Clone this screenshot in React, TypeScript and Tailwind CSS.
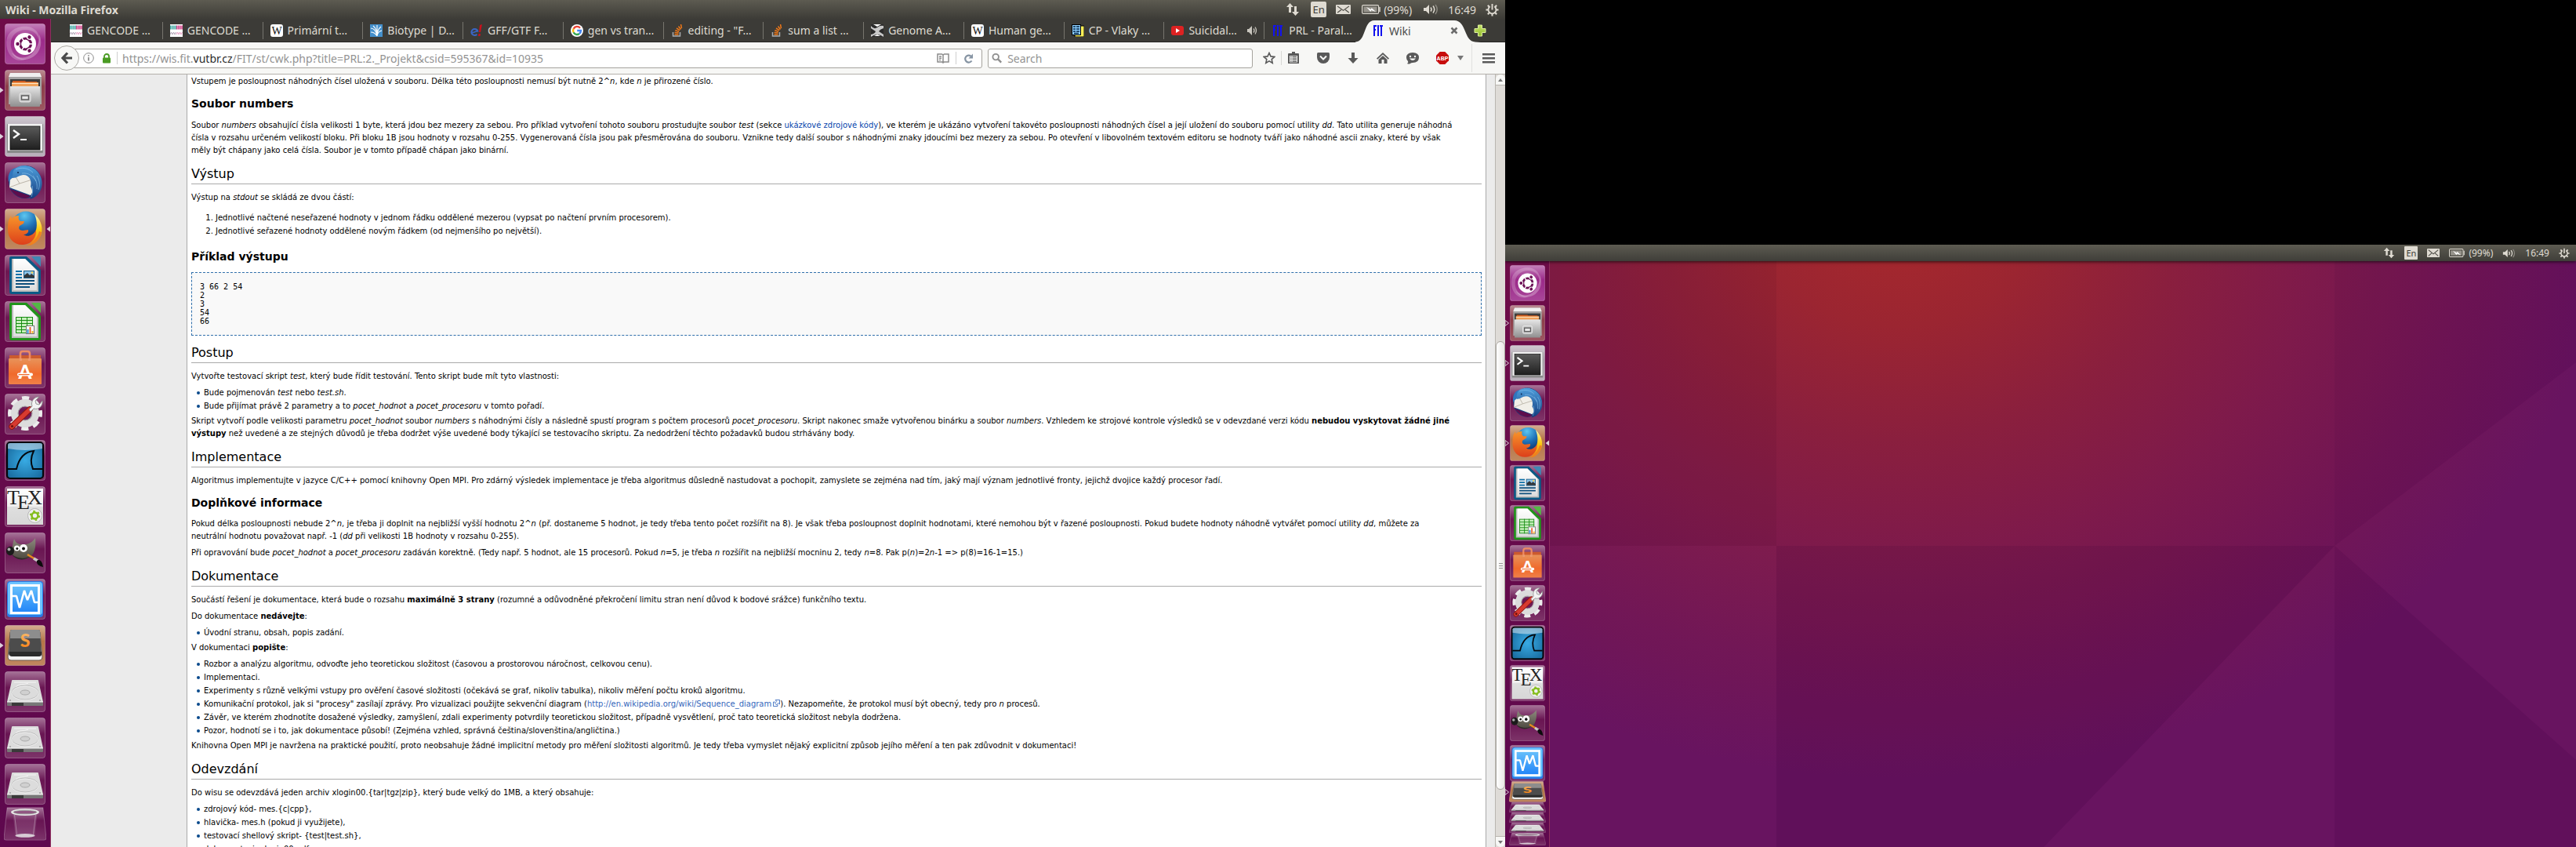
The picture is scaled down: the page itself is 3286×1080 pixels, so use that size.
import React from "react";

type IconName =
  | "ubuntu" | "files" | "terminal" | "thunderbird" | "firefox" | "writer" | "calc" | "software"
  | "settings" | "wireshark" | "tex" | "gimp" | "monitor" | "sublime" | "drive" | "trash";

const tileTone: Partial<Record<IconName, string>> = {
  ubuntu: "#992487",
  files: "#8a3844",
  terminal: "#aea3b0",
  firefox: "#b47242",
  sublime: "#b47242",
};

function Defs() {
  return (
    <svg className="absolute h-0 w-0" aria-hidden="true">
      <defs>
        <linearGradient id="gloss" x1="0" y1="0" x2="0" y2="1">
          <stop offset="0" stopColor="#fff" stopOpacity=".42" />
          <stop offset=".4" stopColor="#fff" stopOpacity=".03" />
          <stop offset=".6" stopColor="#fff" stopOpacity=".06" />
          <stop offset="1" stopColor="#fff" stopOpacity=".16" />
        </linearGradient>
        <linearGradient id="steel" x1="0" y1="0" x2="0" y2="1">
          <stop offset="0" stopColor="#e6e6e6" />
          <stop offset="1" stopColor="#8f8f8f" />
        </linearGradient>
        <linearGradient id="screen" x1="0" y1="0" x2="0" y2="1">
          <stop offset="0" stopColor="#5a5a5a" />
          <stop offset="1" stopColor="#1f1f1f" />
        </linearGradient>
        <linearGradient id="bird" x1="0" y1="0" x2="0" y2="1">
          <stop offset="0" stopColor="#4f9fdc" />
          <stop offset="1" stopColor="#123a7c" />
        </linearGradient>
        <radialGradient id="globe" cx=".45" cy=".15" r=".8">
          <stop offset="0" stopColor="#5cc6f0" />
          <stop offset=".5" stopColor="#1f72b8" />
          <stop offset="1" stopColor="#0b2d66" />
        </radialGradient>
        <linearGradient id="fox" x1="0" y1="0" x2="0" y2="1">
          <stop offset="0" stopColor="#f7942a" />
          <stop offset="1" stopColor="#dd3f1a" />
        </linearGradient>
        <linearGradient id="flame" x1="0" y1="0" x2="0" y2="1">
          <stop offset="0" stopColor="#fff6b0" />
          <stop offset=".5" stopColor="#fbc910" />
          <stop offset="1" stopColor="#ee7a18" />
        </linearGradient>
        <linearGradient id="paper" x1="0" y1="0" x2="0" y2="1">
          <stop offset="0" stopColor="#ffffff" />
          <stop offset="1" stopColor="#dedede" />
        </linearGradient>
        <linearGradient id="bag" x1="0" y1="0" x2="0" y2="1">
          <stop offset="0" stopColor="#e8935a" />
          <stop offset=".6" stopColor="#f06a2c" />
          <stop offset="1" stopColor="#f08048" />
        </linearGradient>
        <radialGradient id="sea" cx=".5" cy=".5" r=".6">
          <stop offset="0" stopColor="#38abe4" />
          <stop offset="1" stopColor="#1b6fa3" />
        </radialGradient>
        <linearGradient id="azure" x1="0" y1="0" x2="0" y2="1">
          <stop offset="0" stopColor="#69c1fb" />
          <stop offset="1" stopColor="#2084f8" />
        </linearGradient>
        <linearGradient id="fur" x1="0" y1="0" x2="0" y2="1">
          <stop offset="0" stopColor="#8e8a7e" />
          <stop offset="1" stopColor="#4c483f" />
        </linearGradient>
        <linearGradient id="amber" x1="0" y1="0" x2="0" y2="1">
          <stop offset="0" stopColor="#fbc67c" />
          <stop offset="1" stopColor="#f77a08" />
        </linearGradient>
        <linearGradient id="lime" x1="0" y1="0" x2="0" y2="1">
          <stop offset="0" stopColor="#c4e26a" />
          <stop offset="1" stopColor="#94bd2e" />
        </linearGradient>
      </defs>
    </svg>
  );
}

function OfficePage({ frame, corner, children }: { frame: string; corner: string; children: React.ReactNode }) {
  return (
    <g>
      <path d="M6 4q0-2 2-2h20l18 17v28q0 3-3 3H9q-3 0-3-3z" fill={frame} />
      <path d="M9 5h17l17 16v26H9z" fill="#bcbcbc" />
      <path d="M11 5h15l15 15v25H11z" fill="url(#paper)" />
      <path d="M34 2h10q2 0 2 2v11z" fill={corner} />
      {children}
    </g>
  );
}

function Drawing({ name }: { name: IconName }) {
  switch (name) {
    case "ubuntu":
      return (
        <g>
          <path d="M3 32C-2 12 14 2 30 4c12 2 18 14 13 25C46 14 36 8 27 8 14 8 6 18 8 30c2 10 10 16 20 15-12 6-22-2-25-13z" fill="#fff" opacity=".22" />
          <path d="M44 14c6 12 0 30-18 32-8 1-15-4-17-9 8 9 20 8 27 0 6-7 9-15 8-23z" fill="#fff" opacity=".28" />
          <circle cx="26" cy="26" r="14" fill="#fff" />
          <circle cx="26.500" cy="26" r="7" fill="none" stroke="#6b0f54" strokeWidth="3.200" />
          {[0, 120, 240].map((a) => (
            <g key={a} transform={`rotate(${a} 26.5 26)`}>
              <circle cx="16.500" cy="26" r="3.400" fill="#fff" />
              <circle cx="16.500" cy="26" r="2.200" fill="#6b0f54" />
              <path d="M31 26h6" stroke="#fff" strokeWidth="1.500" />
            </g>
          ))}
        </g>
      );
    case "files":
      return (
        <g>
          <path d="M7 4h38l2 6v34H5V10z" fill="#a5a5a5" />
          <path d="M7 4h38l2 5H5z" fill="#f0f0f0" />
          <rect x="7" y="12" width="38" height="10" fill="#3c3c3c" />
          <path d="M10 14h16l1 1h14v7H10z" fill="#cf5a1e" />
          <rect x="9" y="16" width="34" height="5" fill="#f0a25a" />
          <rect x="9" y="17" width="34" height="1" fill="#fde3c4" />
          <rect x="7" y="21" width="38" height="26" rx="1" fill="url(#steel)" />
          <path d="M7 21.500h38" stroke="#e4e4e4" />
          <rect x="19" y="30" width="14" height="11" rx="2" fill="#c9c9c9" stroke="#f2f2f2" strokeWidth=".8" />
          <rect x="21.500" y="33" width="9" height="5" fill="#e8e8e8" stroke="#5c5c5c" strokeWidth="1.500" />
        </g>
      );
    case "terminal":
      return (
        <g>
          <rect x="3" y="10" width="46" height="37" rx="1" fill="#8a8a8a" />
          <rect x="4" y="10" width="44" height="34" fill="#f1f1f1" />
          <rect x="7" y="13" width="38" height="30" fill="url(#screen)" stroke="#000" strokeWidth=".7" />
          <path d="M11 18l7 5-7 5" fill="none" stroke="#fff" strokeWidth="2.300" />
          <path d="M20 30h8" stroke="#fff" strokeWidth="2" />
        </g>
      );
    case "thunderbird":
      return (
        <g>
          <circle cx="26" cy="25" r="21" fill="#15407f" />
          <path d="M7 34l26 9q-3 3-7 3-12-1-19-12z" fill="#5e0d4c" />
          <path d="M7 18l24-7 9 20-7 11L6 32z" fill="#f1efe8" />
          <path d="M12 15l7 12 16-5M19 27L6 32" fill="none" stroke="#b3ada0" strokeWidth=".9" />
          <path d="M5 25C3 15 8 8 14 7c-3 5-4 9-3 12-3 2-5 4-6 6z" fill="#2f76bd" />
          <path d="M12 9c6-6 20-7 29 2 9 9 9 24-1 32-2 2-5 3-8 4 4-6 4-12 1-16 2-8-2-15-9-15-5 0-8 4-14 4 0-4 0-8 2-11z" fill="url(#bird)" />
          <path d="M14 9c8-3 16-2 22 4M22 14c8-1 14 3 18 10M36 17c4 5 6 10 5 17M41 17c4 6 4 12 2 18M35 30c1 5 1 9-1 14" fill="none" stroke="#8ec7ee" strokeWidth=".9" opacity=".7" />
          <circle cx="17" cy="13" r="1" fill="#0b2450" />
        </g>
      );
    case "firefox":
      return (
        <g>
          <circle cx="27" cy="22" r="18.500" fill="url(#globe)" />
          <path d="M38 7c7 6 11 15 9 24-2 8-8 14-15 16l5-13c5-7 5-18 1-27z" fill="url(#flame)" />
          <path d="M5 15l3-6 1 4c3-4 7-4 9-4-1 3 0 6 2 7h5l-1 3-5 3c-2 3 0 6 4 6l7-1c1 4-3 6-6 6 5 4 13 1 16-6 1 9-5 18-16 19C12 47 4 38 4 27c0-5 0-8 1-12z" fill="url(#fox)" />
          <path d="M44 29c-2 8-8 15-17 18 9 0 18-6 20-17z" fill="#ef8120" />
        </g>
      );
    case "writer":
      return (
        <OfficePage frame="#0b5a86" corner="#3f88b4">
          <path d="M14 21h8M14 25h8M14 29h8" stroke="#0f70a8" strokeWidth="2" />
          <path d="M14 33h24M14 37h24M14 41h18" stroke="#0d4f7c" strokeWidth="2" />
          <rect x="24.500" y="20.500" width="13" height="9" fill="#8cc4ea" stroke="#175c88" />
          <path d="M25 29v-3l4-3 3 3 2-2 4 3v2z" fill="#33373a" />
          <circle cx="35" cy="22.500" r="1.300" fill="#fbd34d" />
        </OfficePage>
      );
    case "calc":
      return (
        <OfficePage frame="#20941a" corner="#53b844">
          <rect x="14.500" y="20.500" width="21" height="20" fill="#c7f0bd" stroke="#168c10" />
          <path d="M14 24.500h22M14 28.500h22M14 32.500h22M14 36.500h22M21.500 20v21M28.500 20v21" stroke="#168c10" />
          <rect x="27.500" y="31.500" width="10" height="10" fill="#fff" stroke="#777" />
          <path d="M29.500 36v5" strokeWidth="2" stroke="#2a8fd8" />
          <path d="M32.500 33v8" strokeWidth="2" stroke="#e8662a" />
          <path d="M35.500 38v3" strokeWidth="2" stroke="#f3b824" />
        </OfficePage>
      );
    case "software":
      return (
        <g>
          <path d="M6 10h40v5H6z" fill="#cc5a2e" />
          <path d="M20 17v-9q0-3 3-3h6q3 0 3 3v9" fill="none" stroke="#ee8a62" strokeWidth="2.600" />
          <rect x="5" y="14" width="42" height="33" rx="1" fill="url(#bag)" />
          <path d="M20.500 14v3M31.500 14v3" stroke="#ee9a72" strokeWidth="3" />
          <text x="26" y="40" textAnchor="middle" fontFamily="Lato" fontWeight="900" fontSize="24" fill="#fff">A</text>
          <rect x="16" y="32.500" width="20" height="4" rx="2" fill="#fff" />
          <rect x="17.500" y="34" width="14" height="1.200" fill="#f06a2c" />
        </g>
      );
    case "settings":
      return (
        <g>
          <circle cx="26" cy="25" r="19" fill="none" stroke="#ececec" strokeWidth="6" strokeDasharray="8.900 6.020" strokeDashoffset="4.450" />
          <circle cx="26" cy="25" r="13.500" fill="none" stroke="#dcdcdc" strokeWidth="9" />
          <circle cx="26" cy="25" r="9" fill="none" stroke="#a9a9a9" strokeWidth="1.200" />
          <path d="M9 42l23-22" stroke="#8e1510" strokeWidth="7.500" strokeLinecap="round" />
          <path d="M9 42l23-22" stroke="#d73a30" strokeWidth="5.500" strokeLinecap="round" />
          <circle cx="9.500" cy="41.500" r="1.600" fill="#6d100c" />
          <path d="M31 20l4-4c-2-6 2-12 9-12l-5 5 1 4 4 1 4-5c1 7-5 12-11 10l-4 4z" fill="#f4f4f4" stroke="#8c8c8c" strokeWidth=".9" />
        </g>
      );
    case "wireshark":
      return (
        <g>
          <rect x="3" y="3" width="46" height="46" rx="4" fill="url(#sea)" stroke="#04080c" strokeWidth="2.200" />
          <path d="M4 6q0-2 3-2h38q3 0 3 2v5q-22 4-44 0z" fill="#fff" opacity=".45" />
          <path d="M4 37h11c3-13 9-22 22-23-4 8-4 16-1 23h12" fill="none" stroke="#04080c" strokeWidth="2" />
        </g>
      );
    case "tex":
      return (
        <g>
          <rect x="3" y="3" width="46" height="46" fill="url(#paper)" />
          <path d="M3 26h46v23H3z" fill="#cfcfcf" opacity=".5" />
          <g fontFamily="Liberation Serif" fontSize="26" fill="#222">
            <text x="3" y="23">T</text>
            <text x="16" y="29">E</text>
            <text x="29" y="23">X</text>
          </g>
          <circle cx="38.500" cy="37.500" r="9" fill="#efefef" stroke="#aaa" strokeWidth=".8" />
          <circle cx="38.500" cy="37.500" r="4" fill="none" stroke="#84bd1c" strokeWidth="2.600" />
          <circle cx="38.500" cy="37.500" r="5.700" fill="none" stroke="#84bd1c" strokeWidth="2" strokeDasharray="2.500 3.470" />
        </g>
      );
    case "gimp":
      return (
        <g>
          <path d="M12 8c2 5 5 7 9 7 8 1 14-2 18-8 1 10 0 18-6 24-8 5-18 4-23-3-1-7 0-14 2-20z" fill="url(#fur)" />
          <path d="M9 28c6 8 18 9 26 0-6 6-16 7-26 0z" fill="#2c2a26" />
          <circle cx="15.500" cy="20" r="3.600" fill="#fff" />
          <circle cx="24" cy="20" r="5" fill="#fff" />
          <circle cx="15.800" cy="20.500" r="1.500" fill="#111" />
          <circle cx="24" cy="20.500" r="2" fill="#111" />
          <ellipse cx="7" cy="23.500" rx="5" ry="5.700" fill="#1b1b1b" />
          <ellipse cx="5.500" cy="21.500" rx="2" ry="2" fill="#a8a8a8" />
          <path d="M29 28l10 6" stroke="#e58a1f" strokeWidth="2.600" />
          <path d="M37 33l5 3" stroke="#c9c9c9" strokeWidth="3.600" />
          <path d="M41 36c4-3 7 1 8 8-5-1-9-4-8-8z" fill="#0c0c0c" />
        </g>
      );
    case "monitor":
      return (
        <g>
          <rect x="3" y="3" width="46" height="46" rx="4" fill="#2a7ae6" />
          <rect x="4" y="4" width="44" height="42" rx="4" fill="#6cc3ff" />
          <rect x="8.500" y="8.500" width="35" height="35" fill="url(#azure)" stroke="#fff" strokeWidth="3" />
          <path d="M9 22h6l4 15 6-22 4 12 5-12 4 15h6" fill="none" stroke="#fff" strokeWidth="2.600" strokeLinejoin="bevel" />
        </g>
      );
    case "sublime":
      return (
        <g>
          <path d="M7 9h38l3 32q0 4-4 4H8q-4 0-4-4z" fill="#f2f2f2" stroke="#6d5a4c" strokeWidth="1" />
          <path d="M9 6h34q2 0 2 2l2 28q0 3-3 3H8q-3 0-3-3L7 8q0-2 2-2z" fill="#4c4c4c" />
          <path d="M9 6h34q2 0 2 2l1 9H7V8q0-2 2-2z" fill="#8d8d8d" />
          <path d="M6 34h41v3q0 3-3 3H9q-3 0-3-3z" fill="#2b2b2b" />
          <text x="26" y="28" textAnchor="middle" fontFamily="Lato" fontWeight="900" fontSize="23" fill="url(#amber)">S</text>
        </g>
      );
    case "drive":
      return (
        <g>
          <path d="M10 11h32q1 0 1 1l6 27H3l6-27q0-1 1-1z" fill="#dcdcdc" />
          <rect x="3" y="39" width="46" height="5" rx="1" fill="#777" />
          <rect x="9" y="40" width="15" height="4" fill="#3a3a3a" />
          <path d="M3 39h46" stroke="#f8f8f8" />
          <path d="M12 14h28M14 20c5-5 10-2 16-5" stroke="#f6f6f6" fill="none" />
          <ellipse cx="26" cy="27" rx="17" ry="9" fill="none" stroke="#b9b9b9" strokeWidth=".9" />
          <ellipse cx="26" cy="28" rx="17" ry="9" fill="none" stroke="#f4f4f4" strokeWidth=".7" />
          <ellipse cx="26" cy="27" rx="6" ry="3" fill="#d0d0d0" stroke="#a5a5a5" strokeWidth=".9" />
          <circle cx="7" cy="37" r=".8" fill="#777" />
          <circle cx="45" cy="37" r=".8" fill="#777" />
        </g>
      );
    case "trash":
      return (
        <g>
          <path d="M11 9h30l-3 35q-12 5-24 0z" fill="#fff" opacity=".12" />
          <path d="M13 12l3 31M39 12l-3 31" stroke="#cbb4c6" opacity=".5" />
          <ellipse cx="26" cy="8" rx="16" ry="4" fill="none" stroke="#e6e6e6" strokeWidth="2.600" />
          <ellipse cx="26" cy="8" rx="14" ry="2.800" fill="none" stroke="#8b8b8b" strokeWidth=".8" />
          <ellipse cx="26" cy="44" rx="12" ry="3" fill="#d7ccd4" />
        </g>
      );
  }
}

function Tile({ name, folded, className }: { name: IconName; folded?: boolean; className: string }) {
  const shape = folded ? "M4 1h44l4 47q0 3-3 3H3q-3 0-3-3z" : "M3.500.5h45q3 0 3 3v45q0 3-3 3h-45q-3 0-3-3v-45q0-3 3-3z";
  return (
    <svg viewBox="0 0 52 52" preserveAspectRatio="none" className={className} aria-hidden="true">
      <path d={shape} fill={tileTone[name] ?? "#67124f"} fillOpacity={tileTone[name] ? 1 : 0.6} />
      <path d={shape} fill="url(#gloss)" stroke="#fff" strokeOpacity=".25" />
      <Drawing name={name} />
    </svg>
  );
}

const apps: { name: IconName; label: string; running?: boolean; active?: boolean }[] = [
  { name: "ubuntu", label: "Search your computer" },
  { name: "files", label: "Files", running: true },
  { name: "terminal", label: "Terminal", running: true },
  { name: "thunderbird", label: "Thunderbird Mail" },
  { name: "firefox", label: "Firefox Web Browser", running: true, active: true },
  { name: "writer", label: "LibreOffice Writer" },
  { name: "calc", label: "LibreOffice Calc" },
  { name: "software", label: "Ubuntu Software" },
  { name: "settings", label: "System Settings" },
  { name: "wireshark", label: "Wireshark" },
  { name: "tex", label: "Texmaker" },
  { name: "gimp", label: "GIMP" },
  { name: "monitor", label: "System Monitor" },
];

const tail: { name: IconName; label: string; running?: boolean }[] = [
  { name: "sublime", label: "Sublime Text", running: true },
  { name: "drive", label: "Volume 1" },
  { name: "drive", label: "Volume 2" },
  { name: "drive", label: "Volume 3" },
];

function Pip({ side, hollow }: { side: "left" | "right"; hollow?: boolean }) {
  return (
    <svg
      viewBox="0 0 5 8"
      className={side === "left" ? "absolute top-1/2 left-0 h-2 w-[5px] -translate-y-1/2" : "absolute top-1/2 right-0 h-2 w-[5px] -translate-y-1/2"}
      aria-hidden="true"
    >
      <path d={side === "left" ? "M0 0.500L4.500 4L0 7.500z" : "M5 0.500L0.500 4L5 7.500z"} fill={hollow ? "none" : "#dcd0da"} stroke="#dcd0da" strokeWidth={hollow ? 1 : 0} />
    </svg>
  );
}

function Launcher() {
  return (
    <nav aria-label="Launcher" className="flex w-[65px] shrink-0 flex-col gap-[7px] border-r border-[#8e2f5e] bg-gradient-to-b from-[#6e0c48] to-[#5e084e] pt-[6px]">
      {[...apps, ...tail].map((a) => (
        <button key={a.label} aria-label={a.label} className="relative flex w-full shrink-0 justify-center">
          <Tile name={a.name} className="h-[52px] w-[52px]" />
          {a.running && <Pip side="left" />}
          {a.name === "firefox" && <Pip side="right" />}
        </button>
      ))}
      <button aria-label="Trash" className="-mt-1 flex w-full shrink-0 justify-center">
        <Tile name="trash" folded className="h-[43px] w-[54px]" />
      </button>
    </nav>
  );
}

function SmallLauncher() {
  return (
    <nav aria-label="Launcher" className="flex w-[57px] shrink-0 flex-col border-r border-[#8e2f5e] bg-gradient-to-b from-[#6e0c48] to-[#5e084e] pt-[5px]">
      <div className="flex flex-col gap-[5px]">
        {apps.map((a) => (
          <button key={a.label} aria-label={a.label} className="relative flex w-full shrink-0 justify-center">
            <Tile name={a.name} className="h-[46px] w-[45px]" />
            {a.running && <Pip side="left" hollow />}
            {a.active && <Pip side="right" />}
          </button>
        ))}
      </div>
      {tail.map((a) => (
        <button key={a.label} aria-label={a.label} className="relative flex w-full shrink-0 justify-center">
          <Tile name={a.name} folded className={a.name === "sublime" ? "h-[27px] w-[47px]" : "h-[13px] w-[47px]"} />
          {a.running && <Pip side="left" hollow />}
        </button>
      ))}
      <button aria-label="Trash" className="flex w-full shrink-0 justify-center">
        <Tile name="trash" folded className="h-4 w-[47px]" />
      </button>
    </nav>
  );
}

function ArrowsIcon({ className }: { className: string }) {
  return (
    <svg viewBox="0 0 18 18" className={className} fill="#dfdbd2" aria-hidden="true">
      <path d="M5.500 1L10 6H7v7H4V6H1zM12.500 17L8 12h3V5h3v7h3z" />
    </svg>
  );
}
function MailIcon({ className }: { className: string }) {
  return (
    <svg viewBox="0 0 18 13" preserveAspectRatio="none" className={className} aria-hidden="true">
      <rect width="18" height="13" rx="1" fill="#dfdbd2" />
      <path d="M2 2l7 6 7-6M2 11l4.500-4M16 11l-4.500-4" fill="none" stroke="#4a4842" strokeWidth="1.200" />
    </svg>
  );
}
function BatteryIcon({ className }: { className: string }) {
  return (
    <svg viewBox="0 0 24 12" preserveAspectRatio="none" className={className} aria-hidden="true">
      <rect x=".6" y=".6" width="21" height="10.800" rx="1.500" fill="none" stroke="#dfdbd2" strokeWidth="1.200" />
      <rect x="2.500" y="2.500" width="17" height="7" fill="#96938b" />
      <path d="M23 3v6" stroke="#dfdbd2" strokeWidth="1.500" />
      <path d="M6 3l6 3 .5-2L18 9l-6-2-.5 2z" fill="#fff" />
    </svg>
  );
}
function VolumeIcon({ className }: { className: string }) {
  return (
    <svg viewBox="0 0 20 14" className={className} fill="none" aria-hidden="true">
      <path d="M1 5h3l4-4v12L4 9H1z" fill="#dfdbd2" />
      <path d="M10 4.500q2 2.500 0 5M13 2.500q3.500 4.500 0 9" stroke="#dfdbd2" strokeWidth="1.500" />
      <path d="M16 1q4.500 6 0 12" stroke="#8a877f" strokeWidth="1.500" />
    </svg>
  );
}
function PowerIcon({ className }: { className: string }) {
  return (
    <svg viewBox="0 0 18 18" className={className} fill="none" stroke="#dfdbd2" aria-hidden="true">
      <path d="M6 4.500a5.300 5.300 0 1 0 6 0" strokeWidth="2" />
      <path d="M9 1v8" strokeWidth="2" />
      <path d="M3 3l2 2M15 3l-2 2M.5 9h3M14.500 9h3M3 15l2-2M15 15l-2-2M9 14.500v3" strokeWidth="2.200" />
    </svg>
  );
}

function BigPanel() {
  return (
    <header className="flex h-6 shrink-0 items-center bg-gradient-to-b from-[#5d5b51] to-[#3d3c37] pr-2 pl-[7px] font-['Noto_Sans'] text-[14px] text-[#dfdbd2]">
      <h1 className="flex-1 text-[14px] font-bold">Wiki - Mozilla Firefox</h1>
      <button aria-label="Network" className="mr-[14px]"><ArrowsIcon className="h-[18px] w-[18px]" /></button>
      <button className="mr-3 h-5 w-5 rounded-[2px] bg-[#dfdbd2] text-center text-[13px] leading-5 text-[#3d3c37]">En</button>
      <button aria-label="Messages" className="mr-[14px]"><MailIcon className="h-3 w-[19px]" /></button>
      <button className="mr-[14px] flex items-center gap-1"><BatteryIcon className="h-3 w-6" />(99%)</button>
      <button aria-label="Sound" className="mr-3"><VolumeIcon className="h-[14px] w-5" /></button>
      <button className="mr-3">16:49</button>
      <button aria-label="Session"><PowerIcon className="h-[17px] w-[17px]" /></button>
    </header>
  );
}

function SmallPanel() {
  return (
    <header className="relative z-10 flex h-[21px] shrink-0 items-center justify-end bg-gradient-to-b from-[#5d5b51] to-[#3f3e39] pr-2 font-['Noto_Sans'] text-[12px] text-[#dfdbd2] shadow-[0_1px_4px_rgba(0,0,0,0.7)]">
      <button aria-label="Network" className="mr-3"><ArrowsIcon className="h-[15px] w-[15px]" /></button>
      <button className="mr-3 h-[17px] w-[17px] rounded-[1px] bg-[#dfdbd2] text-center text-[11px] leading-[17px] text-[#3d3c37]">En</button>
      <button aria-label="Messages" className="mr-3"><MailIcon className="h-[11px] w-4" /></button>
      <button className="mr-3 flex items-center gap-[5px]"><BatteryIcon className="h-[11px] w-5" />(99%)</button>
      <button aria-label="Sound" className="mr-3"><VolumeIcon className="h-3 w-[17px]" /></button>
      <button className="mr-3">16:49</button>
      <button aria-label="Session"><PowerIcon className="h-[14px] w-[14px]" /></button>
    </header>
  );
}

type Fav = "gencode" | "wikipedia" | "biotype" | "ensembl" | "google" | "stack" | "ucsc" | "idos" | "youtube" | "fit";

function Favicon({ kind }: { kind: Fav }) {
  const body: Record<Fav, React.ReactNode> = {
    gencode: (
      <g>
        <rect width="16" height="16" fill="#fff" />
        <path d="M0 4h8" stroke="#46a9a4" strokeWidth="5" strokeDasharray="1.500 .6" />
        <path d="M8 4h8" stroke="#d03c84" strokeWidth="5" strokeDasharray="1.500 .6" />
        <path d="M0 13l1.500-3 1.500 3 1.500-3 1.500 3 1.500-3" fill="none" stroke="#b0a3b4" />
        <path d="M8 13l1.500-3 1.500 3 1.500-3 1.500 3 1.500-3" fill="none" stroke="#e69cc2" />
      </g>
    ),
    wikipedia: (
      <g>
        <rect width="16" height="16" rx="3" fill="#fff" />
        <text x="8" y="13" textAnchor="middle" fontFamily="Liberation Serif" fontSize="14" fill="#111">W</text>
      </g>
    ),
    biotype: (
      <g>
        <rect width="16" height="16" fill="#4590cc" />
        <path d="M1 5q6 0 8 10M4 2q5 4 5 13M9 1v14M14 3q-5 4-5 12M15 8q-5 1-6 7M1 10q5 0 8 5" fill="none" stroke="#fff" strokeWidth="1.100" />
      </g>
    ),
    ensembl: (
      <g>
        <ellipse cx="5.500" cy="10" rx="4" ry="4" fill="none" stroke="#3a66c4" strokeWidth="2.200" strokeDasharray="21 4" strokeDashoffset="-3" />
        <path d="M2 11l7-2.500" stroke="#3a66c4" strokeWidth="1.600" />
        <path d="M12 1l3-1-2 10h-2zM10.500 12h2.500l-.500 3h-2.500z" fill="#c8101c" />
      </g>
    ),
    google: (
      <g>
        <circle cx="8" cy="8" r="8" fill="#fff" />
        <g fill="none" strokeWidth="2.400">
          <path d="M12 4.700A5 5 0 0 0 3.600 5.700" stroke="#ea4335" />
          <path d="M3.600 5.700a5 5 0 0 0 0 4.600" stroke="#fbbc05" />
          <path d="M3.600 10.300A5 5 0 0 0 11 12" stroke="#34a853" />
          <path d="M11 12a5 5 0 0 0 2-4H8.200" stroke="#4285f4" />
        </g>
      </g>
    ),
    stack: (
      <g fill="none" strokeWidth="1.500">
        <path d="M2.500 10v5h9v-5" stroke="#a9adb0" />
        <path d="M4.500 13h5M4.600 10.500l5 .5M5.300 7.800l4.800 1.400M7 5l4.200 2.600M9.500 2.500l3 4M12.500 0l1 5.200" stroke="#f07818" />
      </g>
    ),
    ucsc: (
      <g>
        <rect width="16" height="16" fill="#2b2b2b" />
        <path d="M0 2q4 5 8 2t8-2v3q-4 1-6 4l6 4v3q-4-3-8-3t-8 3v-3q5-1 6-4L0 5z" fill="#c9c9c9" />
        <path d="M3 0h10l-5 3zM4 15l4-2 4 2z" fill="#fff" />
      </g>
    ),
    idos: (
      <g>
        <rect x="4" y="2" width="12" height="14" fill="#fff25a" stroke="#000" />
        <rect x=".5" y=".5" width="11" height="13" fill="#8fd0ff" stroke="#000" />
        <path d="M2 3h3M6 3h4M2 6h3M6 6h4M2 9h3M6 9h4M3 11.500h6" stroke="#024" strokeWidth="1.300" />
      </g>
    ),
    youtube: (
      <g>
        <rect y="2" width="16" height="12" rx="3" fill="#dd2222" />
        <path d="M6 5l5 3-5 3z" fill="#fff" />
      </g>
    ),
    fit: (
      <g fill="#1212ee">
        <rect x="2" y="1" width="2" height="14" />
        <rect x="4" y="1" width="2" height="2" />
        <rect x="4" y="6" width="1" height="2" />
        <rect x="7" y="1" width="2" height="14" />
        <rect x="10" y="1" width="4" height="2" />
        <rect x="11" y="1" width="2" height="14" />
      </g>
    ),
  };
  return (
    <svg viewBox="0 0 16 16" className="h-4 w-4 shrink-0" aria-hidden="true">
      {body[kind]}
    </svg>
  );
}

const tabs: { icon: Fav; title: string; sound?: boolean }[] = [
  { icon: "gencode", title: "GENCODE …" },
  { icon: "gencode", title: "GENCODE …" },
  { icon: "wikipedia", title: "Primární t…" },
  { icon: "biotype", title: "Biotype | D…" },
  { icon: "ensembl", title: "GFF/GTF F…" },
  { icon: "google", title: "gen vs tran…" },
  { icon: "stack", title: "editing - \"F…" },
  { icon: "stack", title: "sum a list …" },
  { icon: "ucsc", title: "Genome A…" },
  { icon: "wikipedia", title: "Human ge…" },
  { icon: "idos", title: "CP - Vlaky …" },
  { icon: "youtube", title: "Suicidal…", sound: true },
  { icon: "fit", title: "PRL - Paral…" },
];

function TabStrip() {
  return (
    <div role="tablist" className="flex h-[30px] shrink-0 border-b border-[#232220] bg-[#3c3b37] pl-[15px] font-['Noto_Sans'] text-[14px] text-[#dfdbd2]">
      {tabs.map((t, i) => (
        <div key={i} className="flex min-w-0 flex-1 items-center">
          <button role="tab" aria-selected="false" className="flex min-w-0 flex-1 items-center gap-[6px] pl-[9px] whitespace-nowrap">
            <Favicon kind={t.icon} />
            <span className="min-w-0">{t.title}</span>
            {t.sound && (
              <svg viewBox="0 0 14 14" className="ml-auto h-[14px] w-[14px] shrink-0" aria-label="Playing audio">
                <path d="M1 5h2l4-4v12L3 9H1z" fill="#c9c6be" />
                <path d="M9 4.500q2 2.500 0 5M11 2.500q3 4.500 0 9" fill="none" stroke="#c9c6be" strokeWidth="1.300" />
              </svg>
            )}
          </button>
          <span className={i < tabs.length - 1 ? "ml-2 h-[22px] w-px bg-[#77756e]" : "ml-2 h-[22px] w-px"} />
        </div>
      ))}
      <div className="relative -mb-px flex w-[139px] shrink-0 items-center gap-[6px] pr-5 pl-[9px] text-[#4c4c4c]">
        <svg viewBox="0 0 160 30" preserveAspectRatio="none" className="absolute top-0 -left-3 h-[30px] w-[160px]" aria-hidden="true">
          <path d="M0 29.500C14 29 10 2 24 2H126C142 2 138 29 153 29.500L160 30H0z" fill="#f7f7f5" />
        </svg>
        <button role="tab" aria-selected="true" className="relative flex flex-1 items-center gap-[6px]">
          <Favicon kind="fit" />
          Wiki
        </button>
        <button aria-label="Close tab" className="relative">
          <svg viewBox="0 0 10 10" className="h-[10px] w-[10px]" aria-hidden="true">
            <path d="M1.500 1.500l7 7M8.500 1.500l-7 7" stroke="#6b6b6b" strokeWidth="2.500" />
          </svg>
        </button>
      </div>
      <button aria-label="New tab" className="relative w-10 shrink-0 pr-1">
        <svg viewBox="0 0 16 16" className="h-4 w-4" aria-hidden="true">
          <path d="M5.500 1h5v4.500H15v5h-4.500V15h-5v-4.500H1v-5h4.500z" fill="url(#lime)" stroke="#dff0a0" strokeWidth="1" />
        </svg>
      </button>
    </div>
  );
}

function ToolButton({ label, children, className = "w-[38px]" }: { label: string; children: React.ReactNode; className?: string }) {
  return (
    <button aria-label={label} className={`flex shrink-0 items-center justify-center ${className}`}>
      <svg viewBox="0 0 16 16" className="h-4 w-4" fill="#595959" aria-hidden="true">
        {children}
      </svg>
    </button>
  );
}

function Toolbar() {
  return (
    <div className="flex h-[41px] shrink-0 items-center border-b border-[#b4b1ab] bg-[#f7f7f5] pl-1 font-['Noto_Sans'] text-[14px]">
      <button aria-label="Back" className="z-10 flex h-8 w-8 shrink-0 items-center justify-center rounded-full border border-[#adaba6] bg-[#f7f7f5]">
        <svg viewBox="0 0 16 16" className="h-4 w-4" aria-hidden="true">
          <path d="M9 1.500L3 8l6 6.500M3 8h12" fill="none" stroke="#4a4a4a" strokeWidth="3.200" />
        </svg>
      </button>
      <div className="-ml-2 flex h-[25px] flex-1 items-center rounded-[3px] border border-[#a5a39d] bg-white pl-[12px]">
        <svg viewBox="0 0 14 14" className="mr-[10px] h-[14px] w-[14px]" aria-label="Site information">
          <circle cx="7" cy="7" r="6.300" fill="none" stroke="#8a8a8a" />
          <path d="M7 6v4.500M7 3.200v1.600" stroke="#777" strokeWidth="1.500" />
        </svg>
        <svg viewBox="0 0 12 13" className="mr-[7px] h-[13px] w-3" aria-label="Secure connection">
          <rect x="1" y="5.500" width="10" height="7" rx="1" fill="#4a9b23" />
          <path d="M3 6V4a3 3 0 0 1 6 0v2" fill="none" stroke="#4a9b23" strokeWidth="1.800" />
        </svg>
        <span className="mr-[6px] h-4 w-px bg-[#cfcfcf]" />
        <a href="#address" className="flex-1 text-[14px] whitespace-nowrap text-[#939393]">
          https://wis.fit.<span className="text-[#2c2c2c]">vutbr.cz</span>/FIT/st/cwk.php?title=PRL:2._Projekt&amp;csid=595367&amp;id=10935
        </a>
        <button aria-label="Reader view" className="mr-2">
          <svg viewBox="0 0 16 13" className="h-[13px] w-4" fill="none" stroke="#8c8c8c" strokeWidth="1.500" aria-hidden="true">
            <path d="M1 1h5.500L8 2l1.500-1H15v10H9.500L8 12l-1.500-1H1zM8 2v9M3 4h3M3 6.300h3M3 8.600h2" />
          </svg>
        </button>
        <span className="mr-[9px] h-4 w-px bg-[#cfcfcf]" />
        <button aria-label="Reload" className="mr-[10px]">
          <svg viewBox="0 0 13 13" className="h-[13px] w-[13px]" aria-hidden="true">
            <path d="M10.500 9.500A4.500 4.500 0 1 1 9.500 3.500" fill="none" stroke="#8694a3" strokeWidth="2.200" />
            <path d="M12 .5v6H6.500z" fill="#8694a3" />
          </svg>
        </button>
      </div>
      <label className="ml-[7px] flex h-[25px] w-[338px] shrink-0 items-center gap-[7px] rounded-[3px] border border-[#a5a39d] bg-white pl-1">
        <svg viewBox="0 0 14 14" className="h-[14px] w-[14px]" aria-hidden="true">
          <circle cx="5.500" cy="5.500" r="4" fill="none" stroke="#8f8f8f" strokeWidth="2" />
          <path d="M8.500 8.500L13 13" stroke="#8f8f8f" strokeWidth="2.600" />
        </svg>
        <input aria-label="Search" placeholder="Search" className="w-full bg-transparent outline-none placeholder:text-[#939393]" />
      </label>
      <ToolButton label="Bookmark this page" className="ml-[6px] w-[30px]">
        <path d="M8 1.500l2 4.400 4.800.5-3.600 3.200 1 4.700L8 11.900l-4.200 2.400 1-4.700L1.200 6.400 6 5.900z" fill="none" stroke="#595959" strokeWidth="1.600" />
      </ToolButton>
      <span className="h-[18px] w-px bg-[#d8d8d5]" />
      <ToolButton label="Bookmarks" className="w-[30px]">
        <path d="M6 0h4v2h4q1 0 1 1v12H1V3q0-1 1-1h4zM3 5v8.500h10V5z" fillRule="evenodd" />
        <path d="M4 6.500h1.500M6.500 6.500H12M4 9.200h1.500M6.500 9.200H12M4 12h1.500M6.500 12H12" stroke="#595959" strokeWidth="1.400" />
      </ToolButton>
      <span className="w-1" />
      <ToolButton label="Pocket">
        <path d="M1.500 1h13Q16 1 16 2.500V7a8 8 0 0 1-16 0V2.500Q0 1 1.500 1z" />
        <path d="M4 5.500L8 9.500l4-4" fill="none" stroke="#f7f7f5" strokeWidth="2" />
      </ToolButton>
      <ToolButton label="Downloads">
        <path d="M6 1h4v7h4.500L8 15 1.500 8H6z" />
      </ToolButton>
      <ToolButton label="Home">
        <path d="M8 1l8 7.500-1.200 1.200L8 3.500 1.200 9.700 0 8.500zM8 5l5.500 5v5H9.500v-5h-3v5h-4v-5z" />
      </ToolButton>
      <ToolButton label="Chat">
        <path d="M8 1q8 0 8 6.500T8 14q-2 0-3 1-2 1-4 0 2-1 1-3-2-2-2-4.500Q0 1 8 1z" />
        <circle cx="5" cy="6" r="1.200" fill="#f7f7f5" />
        <circle cx="11" cy="6" r="1.200" fill="#f7f7f5" />
        <path d="M4 8.500q4 5 8 0" fill="#f7f7f5" />
      </ToolButton>
      <ToolButton label="Adblock Plus">
        <path d="M4.700 0h6.600L16 4.700v6.600L11.300 16H4.700L0 11.300V4.700z" fill="#c70d0d" />
        <text x="8" y="10.500" textAnchor="middle" fontFamily="Liberation Sans" fontWeight="bold" fontSize="7" fill="#fff">ABP</text>
      </ToolButton>
      <button aria-label="Adblock options" className="w-[10px]">
        <svg viewBox="0 0 8 6" className="h-[6px] w-2" aria-hidden="true"><path d="M0 0h8L4 6z" fill="#777" /></svg>
      </button>
      <span className="ml-2 h-9 w-px bg-[#e2e2df]" />
      <ToolButton label="Menu" className="w-[42px]">
        <path d="M0 2h16v2.500H0zM0 7h16v2.500H0zM0 12h16v2.500H0z" />
      </ToolButton>
    </div>
  );
}

const H2 = ({ children }: { children: React.ReactNode }) => (
  <h2 className="mt-[11px] border-b border-[#aaaaaa] pb-px text-[16px] leading-[22px]">{children}</h2>
);
const H3 = ({ children }: { children: React.ReactNode }) => <h3 className="text-[14px] leading-5 font-bold">{children}</h3>;
const Bullets = ({ items }: { items: React.ReactNode[] }) => (
  <ul className="mt-1 mb-[3px] pl-4">
    {items.map((it, i) => (
      <li key={i} className="relative leading-[17px] before:absolute before:top-[7px] before:-left-[9px] before:h-1 before:w-1 before:rounded-full before:bg-[#0a4a8c]">
        {it}
      </li>
    ))}
  </ul>
);

function Article() {
  return (
    <article className="min-w-0 flex-1 overflow-hidden border-x border-[#aaaaaa] bg-white px-[5px] pt-px font-['DejaVu_Sans'] text-[10px] leading-4 text-black">
      <p>Vstupem je posloupnost náhodných čísel uložená v souboru. Délka této posloupnosti nemusí být nutně 2^<i>n</i>, kde <i>n</i> je přirozené číslo.</p>
      <div className="mt-[10px]"><H3>Soubor numbers</H3></div>
      <p className="mt-[10px]">
        Soubor <i>numbers</i> obsahující čísla velikosti 1 byte, která jdou bez mezery za sebou. Pro příklad vytvoření tohoto souboru prostudujte soubor <i>test</i> (sekce <a href="#kody" className="text-[#0645ad]">ukázkové zdrojové kódy</a>), ve kterém je ukázáno vytvoření takovéto posloupnosti náhodných čísel a její uložení do souboru pomocí utility <i>dd</i>. Tato utilita generuje náhodná
        <br />čísla v rozsahu určeném velikostí bloku. Při bloku 1B jsou hodnoty v rozsahu 0-255. Vygenerovaná čísla jsou pak přesměrována do souboru. Vznikne tedy další soubor s náhodnými znaky jdoucími bez mezery za sebou. Po otevření v libovolném textovém editoru se hodnoty tváří jako náhodné ascii znaky, které by však
        <br />měly být chápany jako celá čísla. Soubor je v tomto případě chápan jako binární.
      </p>
      <H2>Výstup</H2>
      <p className="mt-[9px]">Výstup na <i>stdout</i> se skládá ze dvou částí:</p>
      <ol className="mt-[9px] list-decimal pl-[31px] leading-[17px]">
        <li>Jednotlivé načtené neseřazené hodnoty v jednom řádku oddělené mezerou (vypsat po načtení prvním procesorem).</li>
        <li>Jednotlivé seřazené hodnoty oddělené novým řádkem (od nejmenšího po největší).</li>
      </ol>
      <div className="mt-[14px]"><H3>Příklad výstupu</H3></div>
      <pre className="mt-[10px] border border-dashed border-[#2f6fab] bg-[#f9f9f9] px-[10px] py-3 font-['DejaVu_Sans_Mono'] text-[10px] leading-[11px]">{"3 66 2 54\n2\n3\n54\n66"}</pre>
      <H2>Postup</H2>
      <p className="mt-[9px]">Vytvořte testovací skript <i>test</i>, který bude řídit testování. Tento skript bude mít tyto vlastnosti:</p>
      <Bullets
        items={[
          <>Bude pojmenován <i>test</i> nebo <i>test.sh</i>.</>,
          <>Bude přijímat právě 2 parametry a to <i>pocet_hodnot</i> a <i>pocet_procesoru</i> v tomto pořadí.</>,
        ]}
      />
      <p>
        Skript vytvoří podle velikosti parametru <i>pocet_hodnot</i> soubor <i>numbers</i> s náhodnými čísly a následně spustí program s počtem procesorů <i>pocet_procesoru</i>. Skript nakonec smaže vytvořenou binárku a soubor <i>numbers</i>. Vzhledem ke strojové kontrole výsledků se v odevzdané verzi kódu <b>nebudou vyskytovat žádné jiné
        <br />výstupy</b> než uvedené a ze stejných důvodů je třeba dodržet výše uvedené body týkající se testovacího skriptu. Za nedodržení těchto požadavků budou strhávány body.
      </p>
      <H2>Implementace</H2>
      <p className="mt-[9px]">Algoritmus implementujte v jazyce C/C++ pomocí knihovny Open MPI. Pro zdárný výsledek implementace je třeba algoritmus důsledně nastudovat a pochopit, zamyslete se zejména nad tím, jaký mají význam jednotlivé fronty, jejichž dvojice každý procesor řadí.</p>
      <div className="mt-[10px]"><H3>Doplňkové informace</H3></div>
      <p className="mt-[9px]">
        Pokud délka posloupnosti nebude 2^<i>n</i>, je třeba ji doplnit na nejbližší vyšší hodnotu 2^<i>n</i> (př. dostaneme 5 hodnot, je tedy třeba tento počet rozšířit na 8). Je však třeba posloupnost doplnit hodnotami, které nemohou být v řazené posloupnosti. Pokud budete hodnoty náhodně vytvářet pomocí utility <i>dd</i>, můžete za
        <br />neutrální hodnotu považovat např. -1 (<i>dd</i> při velikosti 1B hodnoty v rozsahu 0-255).
      </p>
      <p className="mt-[5px]">Při opravování bude <i>pocet_hodnot</i> a <i>pocet_procesoru</i> zadáván korektně. (Tedy např. 5 hodnot, ale 15 procesorů. Pokud <i>n</i>=5, je třeba <i>n</i> rozšířit na nejbližší mocninu 2, tedy <i>n</i>=8. Pak p(<i>n</i>)=2<i>n</i>-1 =&gt; p(8)=16-1=15.)</p>
      <H2>Dokumentace</H2>
      <p className="mt-[9px]">Součástí řešení je dokumentace, která bude o rozsahu <b>maximálně 3 strany</b> (rozumné a odůvodněné překročení limitu stran není důvod k bodové srážce) funkčního textu.</p>
      <p className="mt-[5px]">Do dokumentace <b>nedávejte</b>:</p>
      <Bullets items={["Úvodní stranu, obsah, popis zadání."]} />
      <p>V dokumentaci <b>popište</b>:</p>
      <Bullets
        items={[
          "Rozbor a analýzu algoritmu, odvoďte jeho teoretickou složitost (časovou a prostorovou náročnost, celkovou cenu).",
          "Implementaci.",
          "Experimenty s různě velkými vstupy pro ověření časové složitosti (očekává se graf, nikoliv tabulka), nikoliv měření počtu kroků algoritmu.",
          <>
            Komunikační protokol, jak si "procesy" zasílají zprávy. Pro vizualizaci použijte sekvenční diagram (
            <a href="#sequence" className="text-[#3366bb]">
              http://en.wikipedia.org/wiki/Sequence_diagram
              <svg viewBox="0 0 10 10" className="ml-[2px] inline h-[9px] w-[9px] align-baseline" fill="none" stroke="#3366bb" aria-hidden="true">
                <path d="M3 3.500H.5v6h6V7M3.500.5h6v6L7.500 5 5 7.500 2.800 5.200 5.200 2.800z" />
              </svg>
            </a>
            ). Nezapomeňte, že protokol musí být obecný, tedy pro <i>n</i> procesů.
          </>,
          "Závěr, ve kterém zhodnotíte dosažené výsledky, zamyšlení, zdali experimenty potvrdily teoretickou složitost, případně vysvětlení, proč tato teoretická složitost nebyla dodržena.",
          "Pozor, hodnotí se i to, jak dokumentace působí! (Zejména vzhled, správná čeština/slovenština/angličtina.)",
        ]}
      />
      <p>Knihovna Open MPI je navržena na praktické použití, proto neobsahuje žádné implicitní metody pro měření složitosti algoritmů. Je tedy třeba vymyslet nějaký explicitní způsob jejího měření a ten pak zdůvodnit v dokumentaci!</p>
      <H2>Odevzdání</H2>
      <p className="mt-[9px]">Do wisu se odevzdává jeden archiv xlogin00.{"{tar|tgz|zip}"}, který bude velký do 1MB, a který obsahuje:</p>
      <Bullets
        items={[
          "zdrojový kód- mes.{c|cpp},",
          "hlavička- mes.h (pokud ji využijete),",
          "testovací shellový skript- {test|test.sh},",
          "dokumentaci- xlogin00.pdf.",
        ]}
      />
    </article>
  );
}

function ScrollBar() {
  return (
    <div className="flex w-[13px] shrink-0 flex-col border-l border-[#b9b6b0] bg-[#dedbd7]">
      <button aria-label="Scroll up" className="flex h-[14px] items-center justify-center rounded-t-full border-b border-[#b9b6b0] bg-[#f7f7f5]">
        <svg viewBox="0 0 6 4" className="h-1 w-[6px]" aria-hidden="true"><path d="M0 4h6L3 0z" fill="#777" /></svg>
      </button>
      <div className="flex flex-1 flex-col">
        <span className="flex-[327]" />
        <div className="flex flex-[571] flex-col items-center justify-center gap-[2px] rounded-full border border-[#a9a6a0] bg-gradient-to-r from-white to-[#e9e7e4]">
          <span className="h-px w-[5px] bg-[#999]" />
          <span className="h-px w-[5px] bg-[#999]" />
          <span className="h-px w-[5px] bg-[#999]" />
        </div>
        <span className="flex-[59]" />
      </div>
      <button aria-label="Scroll down" className="flex h-[14px] items-center justify-center rounded-b-full border-t border-[#b9b6b0] bg-[#f7f7f5]">
        <svg viewBox="0 0 6 4" className="h-1 w-[6px]" aria-hidden="true"><path d="M0 0h6L3 4z" fill="#777" /></svg>
      </button>
    </div>
  );
}

function Wallpaper() {
  return (
    <svg viewBox="0 0 1366 768" preserveAspectRatio="none" className="absolute inset-0 h-full w-full" aria-hidden="true">
      <defs>
        <radialGradient id="wall" gradientUnits="userSpaceOnUse" cx="0" cy="0" r="720" gradientTransform="translate(500 -40) scale(1.25 1)">
          <stop offset="0" stopColor="#a8292c" />
          <stop offset=".2" stopColor="#9b2531" />
          <stop offset=".4" stopColor="#8a1f3e" />
          <stop offset=".6" stopColor="#7e1a4b" />
          <stop offset=".8" stopColor="#711554" />
          <stop offset="1" stopColor="#67125f" />
        </radialGradient>
      </defs>
      <rect width="1366" height="768" fill="url(#wall)" />
      <rect width="346" height="384" fill="#2a0018" opacity=".07" />
      <rect y="384" width="346" height="384" fill="#fff" opacity=".01" />
      <path d="M346 384h712L687 768H346z" fill="#2a0030" opacity=".1" />
      <path d="M1058 384L687 768h371z" fill="#fff" opacity=".01" />
      <path d="M1058 0h308v150L1058 384z" fill="#2a0030" opacity=".06" />
      <path d="M1058 384l308-234v507z" fill="#fff" opacity=".01" />
      <path d="M1058 384l308 273v111h-308z" fill="#2a0030" opacity=".08" />
    </svg>
  );
}

export default function App() {
  return (
    <div className="grid h-screen grid-cols-[1920fr_1366fr] overflow-hidden bg-black">
      <Defs />
      <section aria-label="Primary display" className="flex min-h-0 min-w-0 flex-col">
        <BigPanel />
        <div className="flex min-h-0 flex-1">
          <Launcher />
          <div className="flex min-w-0 flex-1 flex-col">
            <TabStrip />
            <Toolbar />
            <main className="flex min-h-0 flex-1 bg-[#ebebeb] pl-[173px]">
              <Article />
              <div className="w-[11px] shrink-0" />
              <ScrollBar />
            </main>
          </div>
        </div>
      </section>
      <section aria-label="Secondary display" className="relative mt-auto flex aspect-[1366/768] w-full min-w-0 flex-col overflow-hidden">
        <Wallpaper />
        <SmallPanel />
        <div className="relative flex min-h-0 flex-1">
          <SmallLauncher />
        </div>
      </section>
    </div>
  );
}
